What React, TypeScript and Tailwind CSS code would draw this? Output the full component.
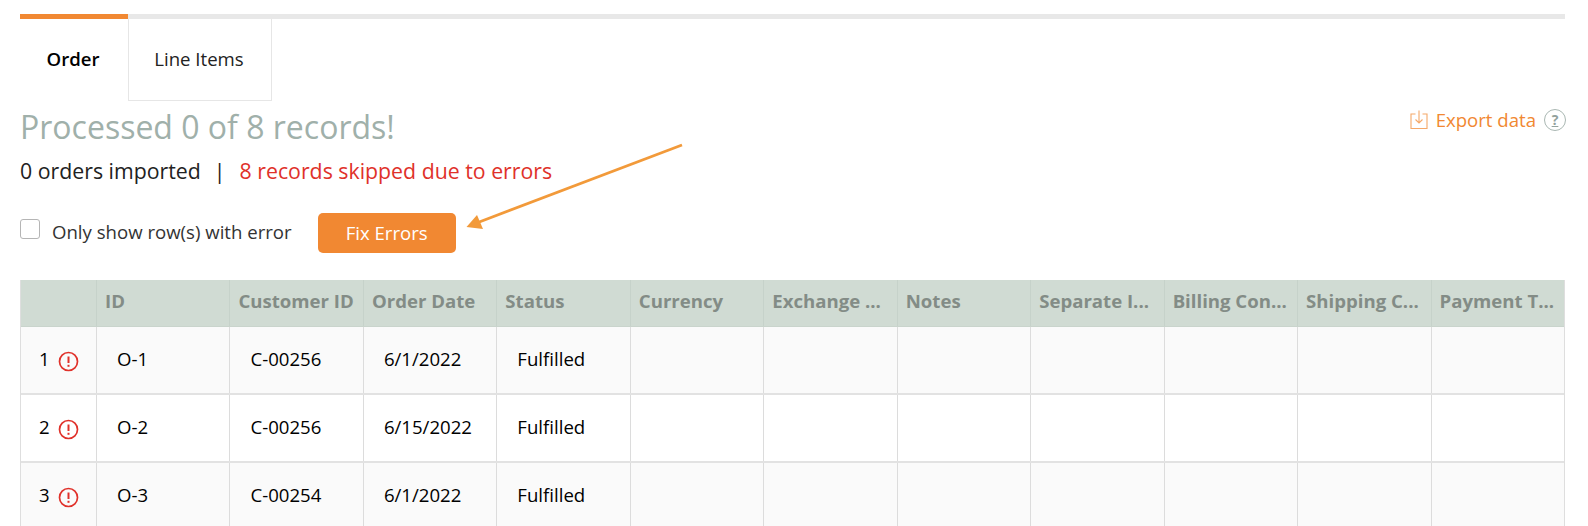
import React from "react";

const headers = ["", "ID", "Customer ID", "Order Date", "Status", "Currency", "Exchange ...", "Notes", "Separate I...", "Billing Con...", "Shipping C...", "Payment T..."];
const rows = [
  ["1", "O-1", "C-00256", "6/1/2022", "Fulfilled"],
  ["2", "O-2", "C-00256", "6/15/2022", "Fulfilled"],
  ["3", "O-3", "C-00254", "6/1/2022", "Fulfilled"],
];
const grid = "grid grid-cols-[75px_repeat(11,minmax(0,1fr))]";

function ErrorIcon() {
  return (
    <svg width="21" height="21" viewBox="0 0 21 21" fill="none" className="mt-1 shrink-0">
      <circle cx="10.5" cy="10.5" r="9" stroke="#e0312a" strokeWidth="1.7" />
      <path d="M10.5 5.5v6.5" stroke="#e0312a" strokeWidth="2" />
      <path d="M10.5 13.8v2" stroke="#e0312a" strokeWidth="2" />
    </svg>
  );
}

export default function App() {
  return (
    <div className="relative h-[526px] w-[1588px] overflow-hidden bg-white pt-[14px] pr-[23px] pl-5 font-['Open_Sans',sans-serif] text-[18.6px] text-[#222]">
      <div className="flex h-[5px] bg-[#e8e8e8]">
        <div className="w-[108px] bg-[#f18832]" />
      </div>
      <div className="flex h-[82px]">
        <div className="flex w-[108px] items-start justify-center pt-[26px] pr-[2px] font-semibold text-black">Order</div>
        <div className="flex w-[144px] items-start justify-center border-x border-b border-[#e6e6e6] pt-[26px] pr-[2px]">Line Items</div>
      </div>
      <div className="flex items-start justify-between">
        <h1 className="mt-[4px] text-[32px] leading-[44px] font-normal text-[#a0b0aa]">Processed 0 of 8 records!</h1>
        <div className="mt-[5px] mr-[-1px] flex items-center text-[#f18832]">
          <svg width="18" height="20" viewBox="0 0 18 20" fill="none" stroke="#f5a868" strokeWidth="1.1" className="mr-2">
            <path d="M5.5 4H1v14.5h16V4h-4.5" />
            <path d="M9 0.5v12M5.5 9.5 9 13l3.5-3.5" />
          </svg>
          <span>Export data</span>
          <span className="ml-2 flex h-[22px] w-[22px] items-center justify-center rounded-full border border-[#a9b7b2] text-[14px] leading-none font-bold text-[#93a29d] underline">?</span>
        </div>
      </div>
      <div className="mt-2 flex items-center text-[21.3px] leading-[28px]">
        <span>0 orders imported</span>
        <span className="mr-[14px] ml-[13px]">|</span>
        <span className="text-[#e0312a]">8 records skipped due to errors</span>
      </div>
      <div className="mt-[28px] flex h-[40px] items-center">
        <span className="-mt-[8px] h-5 w-5 rounded-[3px] border border-[#b5b5b5] bg-white" />
        <span className="-mt-[2px] ml-[12px] text-[#333]">Only show row(s) with error</span>
        <button className="ml-[26px] h-10 w-[138px] rounded-[5px] bg-[#f18832] text-white">Fix Errors</button>
      </div>
      <div className="mt-[27px] border-x border-[#dedede]">
        <div className={`${grid} h-[47px] border-b border-[#c9d4cc] bg-[#d0dbd3]`}>
          {headers.map((h, i) => (
            <div key={i} className={`flex items-center overflow-hidden pb-1 pl-2 font-bold whitespace-nowrap text-[#838c86] ${i ? "border-l border-[#c6d2ca]" : ""}`}>
              {h}
            </div>
          ))}
        </div>
        {rows.map((r, ri) => (
          <div key={ri} className={`${grid} h-[68px] border-b-2 border-[#e2e2e2] ${ri % 2 === 0 ? "bg-[#fafafa]" : "bg-white"}`}>
            {headers.map((_, i) => (
              <div key={i} className={`flex items-center pb-[2px] text-black ${i ? "border-l border-[#dcdcdc] pl-5" : "pl-[18px]"}`}>
                {i === 0 ? (
                  <>
                    <span className="w-[19px]">{r[0]}</span>
                    <ErrorIcon />
                  </>
                ) : (
                  r[i] ?? ""
                )}
              </div>
            ))}
          </div>
        ))}
      </div>
      <svg className="pointer-events-none absolute top-0 left-0" width="1588" height="526" fill="none">
        <path d="M682 145 474 224" stroke="#f29a3a" strokeWidth="2.8" />
        <path d="M466.5 227 477 215 483 229Z" fill="#f29a3a" />
      </svg>
    </div>
  );
}
